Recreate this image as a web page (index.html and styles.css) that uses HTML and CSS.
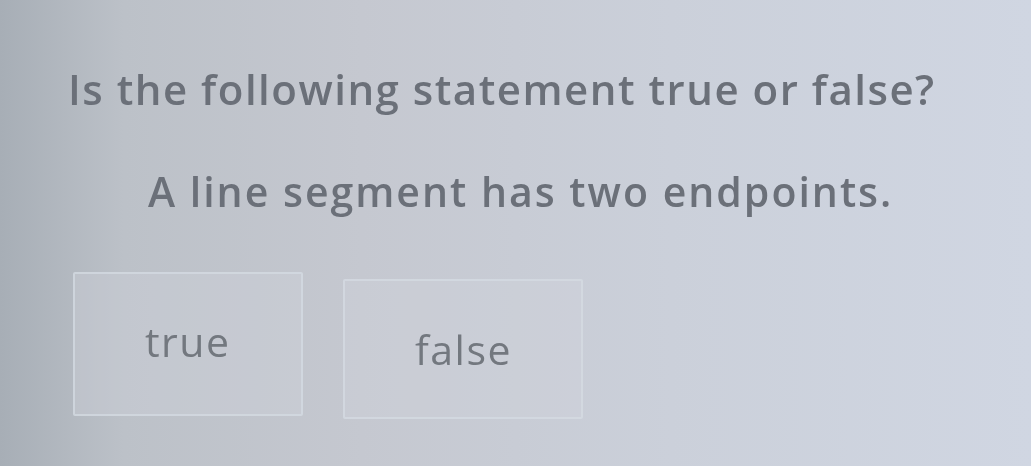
FILE: index.html
```html
<!DOCTYPE html>
<html lang="en">
<head>
    <meta charset="UTF-8">
    <meta name="viewport" content="width=device-width, initial-scale=1.0">
    <title>True or False</title>
    <link rel="stylesheet" href="styles.css">
</head>
<body>
    <div class="quiz">
        <h1 class="question">Is the following statement true or false?</h1>
        <p class="statement">A line segment has two endpoints.</p>
        <div class="answers">
            <button type="button" class="answer answer-true">true</button>
            <button type="button" class="answer answer-false">false</button>
        </div>
    </div>
</body>
</html>
```

FILE: styles.css
```css
html, body {
    height: 100%;
}
body {
    margin: 0;
    font-family: "Open Sans", "DejaVu Sans", sans-serif;
    color: #6b7079;
    background: linear-gradient(90deg, #a7aeb6 0%, #bcc1c8 12%, #c5c8d0 35%, #cbd0da 65%, #d0d6e2 100%);
    overflow: hidden;
}
.quiz {
    display: flex;
    flex-direction: column;
    align-items: flex-start;
    padding: 60px 0 0 68px;
    filter: blur(0.7px);
}
.question {
    margin: 0;
    font-size: 42px;
    font-weight: 600;
    line-height: 58px;
    letter-spacing: 1.5px;
}
.statement {
    margin: 46px 0 0 80px;
    font-size: 41px;
    font-weight: 600;
    line-height: 54px;
    letter-spacing: 2px;
}
.answers {
    display: flex;
    align-items: flex-start;
    gap: 40px;
    margin: 54px 0 0 5px;
}
.answer {
    font-family: inherit;
    color: #73787f;
    background-color: rgba(208, 212, 220, 0.35);
    border: 2px solid rgba(214, 219, 227, 0.7);
    border-radius: 2px;
    font-size: 41px;
    letter-spacing: 1.5px;
    text-align: left;
    padding: 0 0 0 70px;
}
.answer-true {
    width: 230px;
    height: 144px;
    padding-bottom: 6px;
}
.answer-false {
    width: 240px;
    height: 140px;
    margin-top: 7px;
    padding-bottom: 0;
}
```
